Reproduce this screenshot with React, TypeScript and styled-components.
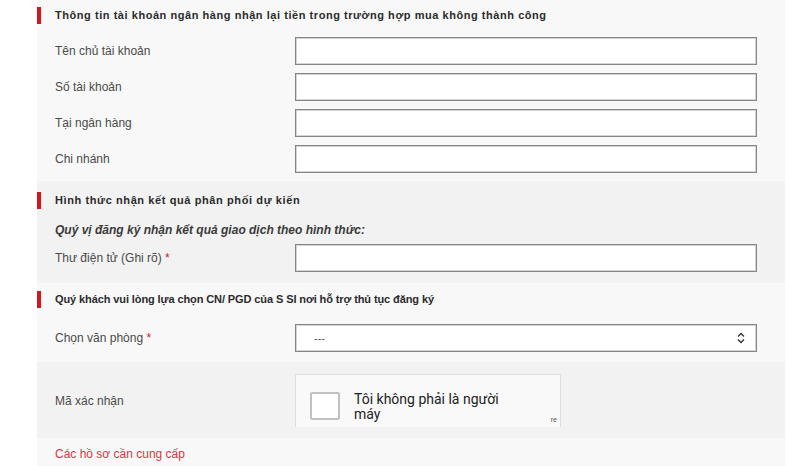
import styled, { createGlobalStyle } from "styled-components";

const GlobalStyle = createGlobalStyle`
  body {
    margin: 0;
    background: #ffffff;
    font-family: "Liberation Sans", Arial, sans-serif;
  }
`;

const Panel = styled.div`
  margin-left: 37px;
  width: 748px;
  height: 466px;
  overflow: hidden;
  background: #f8f8f8;
`;

const Section = styled.div<{ $dark?: boolean; $pt?: number; $pb?: number }>`
  background: ${({ $dark }) => ($dark ? "#f2f2f2" : "#f8f8f8")};
  padding: ${({ $pt }) => $pt ?? 0}px 0 ${({ $pb }) => $pb ?? 0}px;
`;

const Heading = styled.div<{ $spacing?: number }>`
  position: relative;
  height: 17px;
  line-height: 17px;
  padding-left: 18px;
  font-size: 11px;
  font-weight: bold;
  letter-spacing: ${({ $spacing }) => $spacing ?? 0}px;
  color: #2b2b2b;

  &::before {
    content: "";
    position: absolute;
    left: 0;
    top: 0;
    width: 4px;
    height: 17px;
    background: #d4151c;
  }
`;

const Note = styled.div`
  padding-left: 18px;
  margin-top: 13px;
  height: 16px;
  line-height: 16px;
  font-size: 12px;
  font-style: italic;
  font-weight: bold;
  color: #3a3a3a;
`;

const Row = styled.div<{ $mt?: number }>`
  display: grid;
  grid-template-columns: 258px 462px;
  align-items: center;
  margin-top: ${({ $mt }) => $mt ?? 0}px;
`;

const Label = styled.label`
  padding-left: 18px;
  font-size: 12px;
  color: #4a4a4a;

  span {
    color: #d4151c;
  }
`;

const Input = styled.div`
  height: 26px;
  background: #fff;
  border: 1px solid #858585;
  box-shadow: inset 0 0 0 1px #d4d4d4;
`;

const Select = styled(Input)`
  display: flex;
  align-items: center;
  justify-content: space-between;
  padding: 0 10px 0 18px;
  font-size: 11px;
  color: #555;
`;

const Captcha = styled.div`
  position: relative;
  width: 266px;
  height: 53px;
  background: #f9f9f9;
  border: 1px solid #dedede;
  border-bottom: none;
  display: flex;
  align-items: flex-start;
  gap: 14px;
  padding: 17px 0 0 14px;
  box-sizing: border-box;
`;

const Check = styled.div`
  width: 26px;
  height: 24px;
  background: #fff;
  border: 2px solid #c1c1c1;
  border-radius: 2px;
  flex: none;
`;

const CaptchaText = styled.div`
  font-size: 14px;
  line-height: 15px;
  color: #222;
  font-family: Roboto, "Liberation Sans", sans-serif;
`;

const Re = styled.span`
  position: absolute;
  right: 3px;
  bottom: 4px;
  font-size: 7px;
  color: #555;
`;

const RedLink = styled.div`
  padding-left: 18px;
  font-size: 12px;
  color: #d9363e;
`;

const Chevron = () => (
  <svg width="10" height="14" viewBox="0 0 10 14" fill="none">
    <path d="M2 5.5 L5 2.5 L8 5.5" stroke="#333" strokeWidth="1.4" />
    <path d="M2 8.5 L5 11.5 L8 8.5" stroke="#333" strokeWidth="1.4" />
  </svg>
);

export default function App() {
  return (
    <>
      <GlobalStyle />
      <Panel>
        <Section $pt={7} $pb={8}>
          <Heading $spacing={0.55}>Thông tin tài khoản ngân hàng nhận lại tiền trong trường hợp mua không thành công</Heading>
          <Row $mt={13}>
            <Label>Tên chủ tài khoản</Label>
            <Input />
          </Row>
          <Row $mt={8}>
            <Label>Số tài khoản</Label>
            <Input />
          </Row>
          <Row $mt={8}>
            <Label>Tại ngân hàng</Label>
            <Input />
          </Row>
          <Row $mt={8}>
            <Label>Chi nhánh</Label>
            <Input />
          </Row>
        </Section>
        <Section $dark $pt={11} $pb={11}>
          <Heading $spacing={0.6}>Hình thức nhận kết quả phân phối dự kiến</Heading>
          <Note>Quý vị đăng ký nhận kết quả giao dịch theo hình thức:</Note>
          <Row $mt={6}>
            <Label>
              Thư điện tử (Ghi rõ) <span>*</span>
            </Label>
            <Input />
          </Row>
        </Section>
        <Section $pt={8} $pb={10}>
          <Heading $spacing={-0.1}>Quý khách vui lòng lựa chọn CN/ PGD của S SI nơi hỗ trợ thủ tục đăng ký</Heading>
          <Row $mt={16}>
            <Label>
              Chọn văn phòng <span>*</span>
            </Label>
            <Select>
              <span>---</span>
              <Chevron />
            </Select>
          </Row>
        </Section>
        <Section $dark $pt={12} $pb={11}>
          <Row>
            <Label>Mã xác nhận</Label>
            <Captcha>
              <Check />
              <CaptchaText>
                Tôi không phải là người
                <br />
                máy
              </CaptchaText>
              <Re>re</Re>
            </Captcha>
          </Row>
        </Section>
        <Section $pt={9}>
          <RedLink>Các hồ sơ cần cung cấp</RedLink>
        </Section>
      </Panel>
    </>
  );
}
